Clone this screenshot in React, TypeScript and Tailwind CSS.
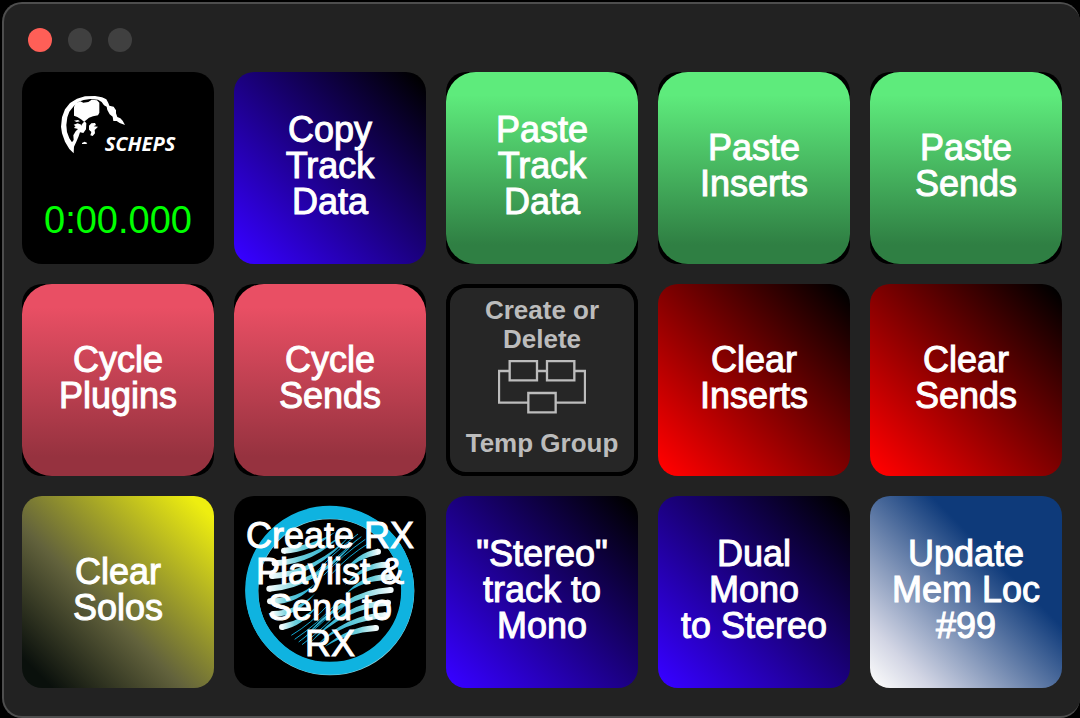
import type { ReactNode } from 'react';
import clsx from 'clsx';

type Tile = {
  lines: string[];
  className: string;
  // green and pink tiles are rounder than the black key behind them
  round?: boolean;
};

const blue = 'bg-linear-to-tr/srgb from-[#3600ff] from-3% to-black to-97%';
const green = 'bg-linear-to-b/srgb from-[#5eeb7c] from-12% to-[#2f7f43] to-90%';
const pink = 'bg-linear-to-b/srgb from-[#e94f64] from-12% to-[#96323f] to-90%';
const red = 'bg-linear-to-tr/srgb from-[#ff0000] from-3% to-black to-97%';
const yellow = 'bg-linear-to-tr/srgb from-[#0a100c] from-8% via-[#62623c] via-42% to-[#eeee10] to-94%';
const navy = 'bg-linear-to-tr/srgb from-[#fafafa] from-2% via-[#d2d5e4] via-16% to-[#0e3a7a] to-66%';

const tiles: Record<string, Tile> = {
  copyTrack: { lines: ['Copy', 'Track', 'Data'], className: blue },
  pasteTrack: { lines: ['Paste', 'Track', 'Data'], className: green, round: true },
  pasteInserts: { lines: ['Paste', 'Inserts'], className: green, round: true },
  pasteSends: { lines: ['Paste', 'Sends'], className: green, round: true },
  cyclePlugins: { lines: ['Cycle', 'Plugins'], className: pink, round: true },
  cycleSends: { lines: ['Cycle', 'Sends'], className: pink, round: true },
  clearInserts: { lines: ['Clear', 'Inserts'], className: red },
  clearSends: { lines: ['Clear', 'Sends'], className: red },
  clearSolos: { lines: ['Clear', 'Solos'], className: yellow },
  stereoToMono: { lines: ['"Stereo"', 'track to', 'Mono'], className: blue },
  monoToStereo: { lines: ['Dual', 'Mono', 'to Stereo'], className: blue },
  memLoc: { lines: ['Update', 'Mem Loc', '#99'], className: navy },
};

function Key({ children }: { children: ReactNode }) {
  return (
    <button type="button" className="relative block aspect-square w-full overflow-hidden rounded-[20px] bg-black text-white">
      {children}
    </button>
  );
}

function Label({ lines }: { lines: string[] }) {
  return (
    <span className="relative flex h-full flex-col items-center justify-center pb-1 text-[36px] leading-9 whitespace-nowrap [-webkit-text-stroke:1px]">
      {lines.map((line, i) => (
        <span key={i}>{line}</span>
      ))}
    </span>
  );
}

function TextKey({ tile }: { tile: Tile }) {
  return (
    <Key>
      <span className={clsx('block h-full', tile.className, tile.round && 'rounded-[30px]')}>
        <Label lines={tile.lines} />
      </span>
    </Key>
  );
}

function SchepsHead() {
  return (
    <svg viewBox="180 288 192 174" className="h-[58px] w-16" fill="#fff">
      <path d="M218 460L205 447L192 425L183 400L180 380L183 352L192 328L207 309L228 296L252 289L282 288L303 292L316 298L322 309L325 317L338 320L345 331L345 340L349 351L358 355L365 362L372 375L356 369L347 363H337L335 350L326 343L319 330L317 320L309 316L302 306L291 299L268 297L248 300L232 306L218 319L205 335L199 352L196 375L198 396L205 415L213 427L218 420L217 406L224 394L231 387L219 384L223 379L240 378L245 370L251 364L256 370L255 388L247 399L237 397L233 409L226 425L219 440Z" />
      <path d="M219 321L224 310L238 304L247 308L262 306L272 299L288 301L295 308V338L291 346L276 349L264 353L255 361L249 365L240 358L229 351L219 347Z" />
      <path d="M264 377L271 370L282 369L285 375L278 379L291 380L285 386L281 390L282 400L275 408L268 406L271 396L264 389Z" />
      <path d="M219 362L231 360L237 364L227 366ZM218 374L230 370L241 374L239 382L226 381ZM243 429L251 425L259 429L256 432H243Z" />
    </svg>
  );
}

function TimerKey() {
  return (
    <Key>
      <span className="flex h-full flex-col items-center pt-6">
        <span className="flex items-end">
          <SchepsHead />
          <span className="-ml-5 font-['Open_Sans'] text-[20px] leading-5 font-bold italic">SCHEPS</span>
        </span>
        <span className="mt-[46px] text-[38px] leading-10 text-[#00ff00]">0:00.000</span>
      </span>
    </Key>
  );
}

function GroupKey() {
  return (
    <Key>
      <span className="flex h-full flex-col items-center rounded-[20px] border-4 border-black bg-[#262626] pt-2 text-[26px] leading-[29px] font-bold whitespace-nowrap text-[#bcbcbc]">
        <span>Create or</span>
        <span>Delete</span>
        <svg viewBox="174 246 264 162" className="mt-1.5 h-[54px] w-[88px]" fill="none" stroke="#bcbcbc" strokeWidth="7">
          <path d="M209 279H177V374H265M291 279H321M403 279H435V374H347" />
          <path d="M209 249H291V307H209ZM321 249H403V307H321ZM265 345H347V403H265Z" />
        </svg>
        <span className="mt-[15px]">Temp Group</span>
      </span>
    </Key>
  );
}

// thick at the rim, tapering to a point: [start x, start y, bend x, bend y, end x, end y]
const waves = [
  [168, 182, 250, 178, 322, 126],
  [140, 220, 260, 212, 348, 128],
  [132, 258, 265, 252, 372, 130],
  [124, 296, 270, 288, 392, 142],
  [126, 334, 210, 336, 262, 280],
  [135, 372, 205, 372, 262, 310],
  [162, 411, 225, 400, 270, 345],
];

const threads = [
  'M190 436Q250 400 300 345', 'M200 448Q270 400 325 340', 'M212 456Q280 405 345 335',
  'M222 464Q295 410 365 330',
];

function WaveHalf() {
  return (
    <>
      {waves.map(([x, y, bx, by, ex, ey]) => (
        <g key={y} fill="url(#wave)">
          <circle cx={x} cy={y} r="9" fill="#f2fbfc" />
          <path d={`M${x} ${y - 9}Q${bx} ${by - 9} ${ex} ${ey}Q${bx} ${by + 9} ${x} ${y + 9}Z`} />
        </g>
      ))}
      {threads.map((d) => (
        <path key={d} d={d} fill="none" stroke="#12a5cf" strokeWidth="3" />
      ))}
    </>
  );
}

function RxKey() {
  return (
    <Key>
      <svg viewBox="18 18 576 576" className="absolute inset-0 h-full w-full">
        <defs>
          <linearGradient id="wave">
            <stop offset="0" stopColor="#f2fbfc" />
            <stop offset="0.35" stopColor="#6fd0dc" />
            <stop offset="1" stopColor="#12a5cf" />
          </linearGradient>
        </defs>
        <circle cx="306" cy="303" r="234" fill="none" stroke="#8ed3dc" strokeWidth="38" />
        <circle cx="305" cy="301" r="234" fill="none" stroke="#0fb3e0" strokeWidth="39" />
        <WaveHalf />
        <g transform="rotate(180 306 298)">
          <WaveHalf />
        </g>
      </svg>
      <Label lines={['Create RX', 'Playlist &', 'Send to', 'RX']} />
    </Key>
  );
}

export default function App() {
  return (
    <div className="min-h-screen bg-black pt-0.5 pl-0.5 font-['Liberation_Sans',Arial,sans-serif]">
      <main className="rounded-[20px] border-2 border-r-0 border-[#4e4e4e] bg-[#222222] px-[18px] pt-6 pb-7">
        <div className="mb-5 flex gap-4 pl-1.5">
          <button type="button" aria-label="Close" className="size-6 rounded-full bg-[#ff5f57]" />
          <button type="button" aria-label="Minimize" className="size-6 rounded-full bg-[#404040]" />
          <button type="button" aria-label="Zoom" className="size-6 rounded-full bg-[#404040]" />
        </div>
        <div className="grid grid-cols-5 gap-5">
          <TimerKey />
          <TextKey tile={tiles.copyTrack} />
          <TextKey tile={tiles.pasteTrack} />
          <TextKey tile={tiles.pasteInserts} />
          <TextKey tile={tiles.pasteSends} />
          <TextKey tile={tiles.cyclePlugins} />
          <TextKey tile={tiles.cycleSends} />
          <GroupKey />
          <TextKey tile={tiles.clearInserts} />
          <TextKey tile={tiles.clearSends} />
          <TextKey tile={tiles.clearSolos} />
          <RxKey />
          <TextKey tile={tiles.stereoToMono} />
          <TextKey tile={tiles.monoToStereo} />
          <TextKey tile={tiles.memLoc} />
        </div>
      </main>
    </div>
  );
}
